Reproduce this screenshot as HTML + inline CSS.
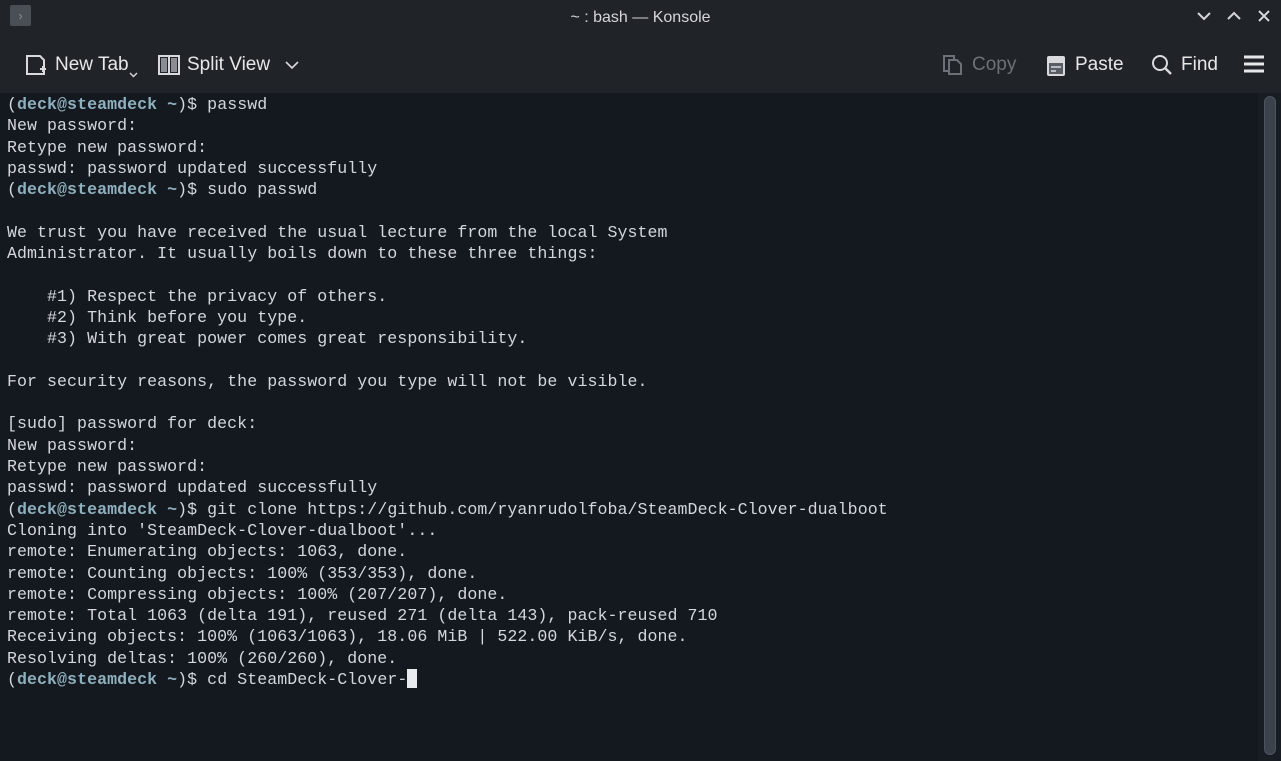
<!DOCTYPE html>
<html><head><meta charset="utf-8"><style>
*{margin:0;padding:0;box-sizing:border-box}
body{width:1281px;height:761px;overflow:hidden;background:#202328;font-family:"Liberation Sans",sans-serif;position:relative}
.title{position:absolute;top:0;left:0;width:1281px;height:36px;color:#d4d6d9;font-size:16px;text-align:center;line-height:35px}
.appicon{position:absolute;left:10px;top:5px;width:21px;height:21px;background:#4a4e55;border-radius:2px;color:#8a8e94;font-size:13px;line-height:21px;text-align:center}
.wc{position:absolute;top:8px;color:#d4d6d9}
.tb{position:absolute;top:52px;height:26px;color:#e6e7e9;font-size:19px;line-height:26px}
.term{position:absolute;left:0;top:93px;width:1258px;height:668px;background:#141920}
.sbar{position:absolute;left:1258px;top:93px;width:23px;height:668px;background:#181d24}
.thumb{position:absolute;left:1264px;top:96px;width:12px;height:659px;background:#3b424b;border:1px solid #4d545d;border-radius:6px}
pre{position:absolute;left:7px;top:94px;font-family:"Liberation Mono",monospace;font-size:16.6px;line-height:21.3px;color:#d3d7db;letter-spacing:0.05px}
b{color:#8fb0bd}
.cur{display:inline-block;width:10px;height:19px;background:#e8ebee;vertical-align:-4px}
</style></head><body>
<div class="title">~ : bash — Konsole</div>
<div class="appicon">›</div>
<svg class="wc" style="left:1196px" width="16" height="16" viewBox="0 0 16 16"><path d="M2 5l6 6 6-6" stroke="#d4d6d9" stroke-width="2" fill="none"/></svg>
<svg class="wc" style="left:1226px" width="16" height="16" viewBox="0 0 16 16"><path d="M2 11l6-6 6 6" stroke="#d4d6d9" stroke-width="2" fill="none"/></svg>
<svg class="wc" style="left:1256px" width="16" height="16" viewBox="0 0 16 16"><path d="M3 3l10 10M13 3L3 13" stroke="#d4d6d9" stroke-width="2" fill="none"/></svg>

<svg style="position:absolute;left:25px;top:54px" width="22" height="22" viewBox="0 0 22 22"><path d="M2 2h13l4 4v14H2z" stroke="#d8dadd" stroke-width="2" fill="none"/><path d="M15 15h6M18 12v6" stroke="#d8dadd" stroke-width="2"/></svg>
<div class="tb" style="left:55px">New Tab</div>
<svg style="position:absolute;left:129px;top:72px" width="9" height="6"><path d="M1 1l3.5 3.5L8 1" stroke="#d8dadd" stroke-width="1.4" fill="none"/></svg>
<svg style="position:absolute;left:158px;top:54px" width="22" height="22" viewBox="0 0 22 22"><rect x="1" y="2" width="20" height="18" stroke="#d8dadd" stroke-width="2" fill="none"/><path d="M11 2v18" stroke="#d8dadd" stroke-width="2"/><rect x="3" y="4" width="6" height="14" fill="#8a8e94"/><rect x="13" y="4" width="6" height="14" fill="#8a8e94"/></svg>
<div class="tb" style="left:187px">Split View</div>
<svg style="position:absolute;left:285px;top:60px" width="14" height="10"><path d="M1 2l6 6 6-6" stroke="#d8dadd" stroke-width="1.6" fill="none"/></svg>

<svg style="position:absolute;left:942px;top:54px" width="22" height="22" viewBox="0 0 22 22"><rect x="2" y="2" width="10" height="15" stroke="#6d7177" stroke-width="2" fill="none"/><path d="M7 6h8l4 4v10H7z" stroke="#6d7177" stroke-width="2" fill="#202328"/></svg>
<div class="tb" style="left:972px;color:#6d7177">Copy</div>
<svg style="position:absolute;left:1045px;top:53px" width="22" height="24" viewBox="0 0 22 24"><rect x="2" y="3" width="18" height="20" rx="2" fill="#d8dadd"/><rect x="4" y="10" width="14" height="11" fill="#5a5e64"/><path d="M6 14h10M6 18h5" stroke="#d8dadd" stroke-width="1.5"/></svg>
<div class="tb" style="left:1075px">Paste</div>
<svg style="position:absolute;left:1151px;top:54px" width="22" height="22" viewBox="0 0 22 22"><circle cx="9" cy="9" r="7" stroke="#d8dadd" stroke-width="2" fill="none"/><path d="M14 14l6 6" stroke="#d8dadd" stroke-width="2.4"/></svg>
<div class="tb" style="left:1181px">Find</div>
<svg style="position:absolute;left:1243px;top:54px" width="22" height="20" viewBox="0 0 22 20"><path d="M1 3h20M1 10h20M1 17h20" stroke="#e6e7e9" stroke-width="3"/></svg>

<div class="term"></div>
<div class="sbar"></div>
<div class="thumb"></div>
<pre>(<b>deck@steamdeck ~</b>)$ passwd
New password:
Retype new password:
passwd: password updated successfully
(<b>deck@steamdeck ~</b>)$ sudo passwd

We trust you have received the usual lecture from the local System
Administrator. It usually boils down to these three things:

    #1) Respect the privacy of others.
    #2) Think before you type.
    #3) With great power comes great responsibility.

For security reasons, the password you type will not be visible.

[sudo] password for deck:
New password:
Retype new password:
passwd: password updated successfully
(<b>deck@steamdeck ~</b>)$ git clone https://github.com/ryanrudolfoba/SteamDeck-Clover-dualboot
Cloning into 'SteamDeck-Clover-dualboot'...
remote: Enumerating objects: 1063, done.
remote: Counting objects: 100% (353/353), done.
remote: Compressing objects: 100% (207/207), done.
remote: Total 1063 (delta 191), reused 271 (delta 143), pack-reused 710
Receiving objects: 100% (1063/1063), 18.06 MiB | 522.00 KiB/s, done.
Resolving deltas: 100% (260/260), done.
(<b>deck@steamdeck ~</b>)$ cd SteamDeck-Clover-<span class="cur"></span></pre>
</body></html>
